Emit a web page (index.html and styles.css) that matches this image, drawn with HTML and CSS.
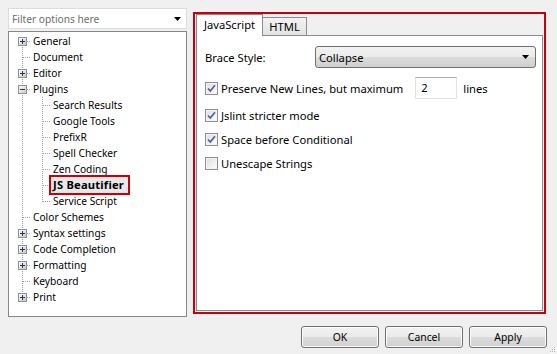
FILE: index.html
```html
<!DOCTYPE html>
<html lang="en">
<head>
  <meta charset="UTF-8">
  <title>Options</title>
  <link rel="stylesheet" href="styles.css">
</head>
<body>

<div class="dialog">
  <div class="main">
    <div class="side">
      <div class="filter">
        <span class="filter-text">Filter options here</span>
        <svg class="drop" width="7" height="4" viewBox="0 0 7 4"><path d="M0 0h7L3.5 4z" fill="#000"/></svg>
      </div>

      <ul class="tree">
        <li class="row first"><span class="twig"><svg class="exp" width="9" height="9" viewBox="0 0 9 9"><use href="#plus"/></svg></span><span class="label">General</span></li>
        <li class="row"><span class="twig"></span><span class="label">Document</span></li>
        <li class="row"><span class="twig"><svg class="exp" width="9" height="9" viewBox="0 0 9 9"><use href="#plus"/></svg></span><span class="label">Editor</span></li>
        <li class="row"><span class="twig"><svg class="exp" width="9" height="9" viewBox="0 0 9 9"><use href="#minus"/></svg></span><span class="label">Plugins</span></li>
        <li class="row"><span class="pass"></span><span class="twig"></span><span class="label">Search Results</span></li>
        <li class="row"><span class="pass"></span><span class="twig"></span><span class="label">Google Tools</span></li>
        <li class="row"><span class="pass"></span><span class="twig"></span><span class="label">PrefixR</span></li>
        <li class="row"><span class="pass"></span><span class="twig"></span><span class="label">Spell Checker</span></li>
        <li class="row"><span class="pass"></span><span class="twig"></span><span class="label">Zen Coding</span></li>
        <li class="row"><span class="pass"></span><span class="twig"></span><span class="label selected">JS Beautifier</span></li>
        <li class="row"><span class="pass"></span><span class="twig end"></span><span class="label">Service Script</span></li>
        <li class="row"><span class="twig"></span><span class="label">Color Schemes</span></li>
        <li class="row"><span class="twig"><svg class="exp" width="9" height="9" viewBox="0 0 9 9"><use href="#plus"/></svg></span><span class="label">Syntax settings</span></li>
        <li class="row"><span class="twig"><svg class="exp" width="9" height="9" viewBox="0 0 9 9"><use href="#plus"/></svg></span><span class="label">Code Completion</span></li>
        <li class="row"><span class="twig"><svg class="exp" width="9" height="9" viewBox="0 0 9 9"><use href="#plus"/></svg></span><span class="label">Formatting</span></li>
        <li class="row"><span class="twig"></span><span class="label">Keyboard</span></li>
        <li class="row"><span class="twig end"><svg class="exp" width="9" height="9" viewBox="0 0 9 9"><use href="#plus"/></svg></span><span class="label">Print</span></li>
      </ul>
    </div>

    <div class="frame">
      <div class="tabs">
        <span class="tab active">JavaScript</span>
        <span class="tab">HTML</span>
      </div>
      <div class="pane">
        <div class="field">
          <span class="field-label">Brace Style:</span>
          <div class="combo">
            <span>Collapse</span>
            <svg width="7" height="4" viewBox="0 0 7 4"><path d="M0 0h7L3.5 4z" fill="#000"/></svg>
          </div>
        </div>
        <div class="check first-check">
          <span class="box"><svg width="9" height="9" viewBox="0 0 9 9"><use href="#tick"/></svg></span>
          <span>Preserve New Lines, but maximum</span>
          <span class="spin">2</span>
          <span>lines</span>
        </div>
        <div class="check">
          <span class="box"><svg width="9" height="9" viewBox="0 0 9 9"><use href="#tick"/></svg></span>
          <span>Jslint stricter mode</span>
        </div>
        <div class="check">
          <span class="box"><svg width="9" height="9" viewBox="0 0 9 9"><use href="#tick"/></svg></span>
          <span>Space before Conditional</span>
        </div>
        <div class="check">
          <span class="box"></span>
          <span>Unescape Strings</span>
        </div>
      </div>
    </div>
  </div>

  <div class="buttons">
    <button class="btn">OK</button>
    <button class="btn">Cancel</button>
    <button class="btn">Apply</button>
  </div>
</div>

<svg class="grip" width="6" height="6" viewBox="0 0 6 6">
  <path d="M4 0h1v1H4zM2 2h1v1H2zM4 2h1v1H4zM0 4h1v1H0zM2 4h1v1H2zM4 4h1v1H4z" fill="#b8b8b8"/>
  <path d="M5 1h1v1H5zM3 3h1v1H3zM5 3h1v1H5zM1 5h1v1H1zM3 5h1v1H3zM5 5h1v1H5z" fill="#fff"/>
</svg>

<svg width="0" height="0" class="defs">
  <defs>
    <linearGradient id="expfill" x1="0" y1="0" x2="1" y2="1">
      <stop offset="0" stop-color="#ffffff"/>
      <stop offset="1" stop-color="#c6c6c6"/>
    </linearGradient>
    <g id="plus">
      <rect x="0.5" y="0.5" width="8" height="8" fill="url(#expfill)" stroke="#919191"/>
      <path d="M2 4.5h5M4.5 2v5" stroke="#1e395b"/>
    </g>
    <g id="minus">
      <rect x="0.5" y="0.5" width="8" height="8" fill="url(#expfill)" stroke="#919191"/>
      <path d="M2 4.5h5" stroke="#1e395b"/>
    </g>
    <path id="tick" d="M1 4.5l2.3 2.6L8 1.2" fill="none" stroke="#4a5f97" stroke-width="1.6"/>
  </defs>
</svg>

</body>
</html>
```

FILE: styles.css
```css
body {
  margin: 0;
  background: #f0f0f0;
  font-family: 'Noto Sans', sans-serif;
  font-size: 11.2px;
  color: #000;
  height: 354px;
  overflow: hidden;
  position: relative;
}

.dialog {
  padding: 8px 0 0 8px;
}

.main {
  display: flex;
  align-items: flex-start;
}

/* left column */
.side {
  width: 179px;
  flex: none;
  font-size: 10.2px;
}

.filter {
  height: 21px;
  box-sizing: border-box;
  background: #fff;
  border: 1px solid #dcdcdc;
  display: flex;
  align-items: center;
  justify-content: space-between;
  padding: 0 5px 0 3px;
}

.filter-text {
  color: #6d6d6d;
  line-height: 16px;
}

.tree {
  list-style: none;
  margin: 2px 0 0;
  padding: 1px 0 0 4px;
  height: 286px;
  box-sizing: border-box;
  background: #fff;
  border: 1px solid #828790;
}

.row {
  display: flex;
  align-items: center;
  height: 16px;
}

.twig, .pass {
  flex: none;
  height: 16px;
  background-repeat: no-repeat;
}

.twig {
  width: 18px;
  display: flex;
  align-items: center;
  background-image:
    repeating-linear-gradient(to right, #a0a0a0 0 1px, transparent 1px 2px),
    repeating-linear-gradient(to bottom, #a0a0a0 0 1px, transparent 1px 2px);
  background-size: 8px 1px, 1px 16px;
  background-position: 10px 8px, 9px 0;
}

.first .twig {
  background-size: 8px 1px, 1px 8px;
  background-position: 10px 8px, 9px 8px;
}

.twig.end {
  background-size: 8px 1px, 1px 9px;
  background-position: 10px 8px, 9px 0;
}

.pass {
  width: 20px;
  background-image: repeating-linear-gradient(to bottom, #a0a0a0 0 1px, transparent 1px 2px);
  background-size: 1px 16px;
  background-position: 9px 0;
}

.exp {
  display: block;
  margin-left: 5px;
}

.label {
  padding: 0 2px;
  line-height: 16px;
  white-space: nowrap;
}

.label.selected {
  font-weight: bold;
  font-size: 11.2px;
  letter-spacing: 0.2px;
  background: #e8e8e8;
  outline: 2px solid #c8000a;
  padding-right: 4px;
}

/* right frame */
.frame {
  width: 353px;
  height: 302px;
  box-sizing: border-box;
  margin: 4px 0 0 6px;
  border: 2px solid #c8000a;
  padding: 0 1px;
}

.tabs {
  display: flex;
  align-items: flex-end;
  height: 21px;
}

.tab {
  height: 18px;
  width: 44px;
  box-sizing: border-box;
  text-align: center;
  line-height: 17px;
  border: 1px solid #898c95;
  border-left: none;
  border-bottom: none;
  background: linear-gradient(#f2f2f2, #e3e3e3);
}

.tab.active {
  width: 67px;
  height: 22px;
  margin-bottom: -1px;
  position: relative;
  line-height: 20px;
  border-left: 1px solid #898c95;
  background: #fff;
}

.pane {
  height: 276px;
  box-sizing: border-box;
  background: #fff;
  border: 1px solid #898c95;
  padding: 10px 6px 0 8px;
}

.field {
  display: flex;
  align-items: center;
  height: 22px;
}

.field-label {
  width: 110px;
  flex: none;
}

.combo {
  flex: 1;
  height: 22px;
  box-sizing: border-box;
  border: 1px solid #707070;
  border-radius: 3px;
  background: linear-gradient(#f2f2f2 0, #ebebeb 50%, #dddddd 50%, #cfcfcf 100%);
  display: flex;
  align-items: center;
  justify-content: space-between;
  padding: 0 6px 0 3px;
}

.check {
  display: flex;
  align-items: center;
  height: 16px;
  margin-top: 8px;
}

.check.first-check {
  height: 22px;
  margin-top: 9px;
}

.box {
  width: 13px;
  height: 13px;
  box-sizing: border-box;
  flex: none;
  border: 1px solid #8f8f8f;
  background: linear-gradient(135deg, #dcdcdc, #ffffff);
  box-shadow: inset 0 0 0 1px #f4f4f4;
  display: flex;
  align-items: center;
  justify-content: center;
  margin-right: 3px;
}

.box svg {
  display: block;
}

.spin {
  width: 42px;
  height: 22px;
  box-sizing: border-box;
  border: 1px solid #e2e3ea;
  border-top-color: #abadb3;
  padding-left: 5px;
  line-height: 20px;
  margin: 0 6px 0 12px;
}

/* bottom buttons */
.buttons {
  display: flex;
  justify-content: flex-end;
  gap: 6px;
  padding-right: 10px;
  margin-top: 9px;
}

.btn {
  width: 78px;
  height: 22px;
  font-family: inherit;
  font-size: 10.4px;
  color: #000;
  border: 1px solid #707070;
  border-radius: 3px;
  background: linear-gradient(#f2f2f2 0, #ebebeb 50%, #dddddd 50%, #cfcfcf 100%);
  box-shadow: inset 0 0 0 1px #fcfcfc;
  padding: 0;
}

.grip {
  position: absolute;
  right: 1px;
  bottom: 1px;
}

.defs {
  position: absolute;
}
```
